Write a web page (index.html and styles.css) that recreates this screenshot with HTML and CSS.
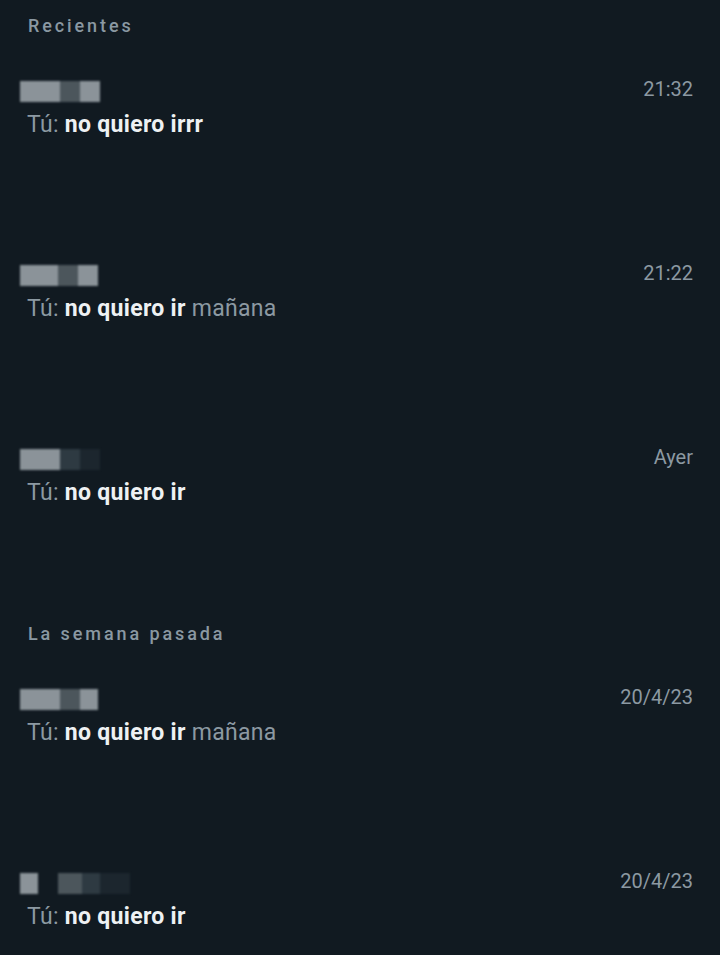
FILE: index.html
```html
<!DOCTYPE html>
<html lang="es">
<head>
    <meta charset="UTF-8">
    <meta name="viewport" content="width=device-width, initial-scale=1.0">
    <title>Chats</title>
    <link rel="stylesheet" href="styles.css">
</head>
<body>
    <div id="chat-list">
        <h3 class="section-title first">Recientes</h3>

        <div class="chat-row">
            <div class="chat-top">
                <div class="name-blur">
                    <span class="blk light w40"></span><span class="blk dark w20"></span><span class="blk light w20"></span>
                </div>
                <span class="time">21:32</span>
            </div>
            <div class="preview"><span class="you">Tú:</span> <strong>no quiero irrr</strong></div>
        </div>

        <div class="chat-row">
            <div class="chat-top">
                <div class="name-blur">
                    <span class="blk light w38"></span><span class="blk dark w20"></span><span class="blk light w20"></span>
                </div>
                <span class="time">21:22</span>
            </div>
            <div class="preview"><span class="you">Tú:</span> <strong>no quiero ir</strong> <span class="you">mañana</span></div>
        </div>

        <div class="chat-row">
            <div class="chat-top">
                <div class="name-blur">
                    <span class="blk light w40"></span><span class="blk darker w20"></span><span class="blk faint w20"></span>
                </div>
                <span class="time">Ayer</span>
            </div>
            <div class="preview"><span class="you">Tú:</span> <strong>no quiero ir</strong></div>
        </div>

        <h3 class="section-title">La semana pasada</h3>

        <div class="chat-row">
            <div class="chat-top">
                <div class="name-blur">
                    <span class="blk light w40"></span><span class="blk dark w20"></span><span class="blk light w18"></span>
                </div>
                <span class="time">20/4/23</span>
            </div>
            <div class="preview"><span class="you">Tú:</span> <strong>no quiero ir</strong> <span class="you">mañana</span></div>
        </div>

        <div class="chat-row">
            <div class="chat-top">
                <div class="name-blur">
                    <span class="blk light w18"></span><span class="blk gap w20"></span><span class="blk dark w24"></span><span class="blk darker w18"></span><span class="blk faint w30"></span>
                </div>
                <span class="time">20/4/23</span>
            </div>
            <div class="preview"><span class="you">Tú:</span> <strong>no quiero ir</strong></div>
        </div>
    </div>
</body>
</html>
```

FILE: styles.css
```css
body {
    margin: 0;
    background-color: #111a21;
    font-family: Roboto, "Noto Sans", Arial, sans-serif;
    color: #e9edef;
}
#chat-list {
    width: 720px;
    height: 955px;
    overflow: hidden;
}
.section-title {
    margin: 0;
    padding: 2px 0 0 28px;
    height: 54px;
    font-size: 18px;
    font-weight: 500;
    letter-spacing: 2.9px;
    color: #8a98a2;
    line-height: 20px;
}
.section-title.first {
    padding-top: 16px;
    height: 54px;
}
.chat-row {
    height: 184px;
    padding: 0 27px 0 20px;
    box-sizing: border-box;
}
.chat-top {
    display: flex;
    justify-content: space-between;
    align-items: center;
    height: 42px;
}
.name-blur {
    display: flex;
    height: 21px;
    filter: blur(1px);
}
.blk {
    height: 100%;
}
.light { background-color: #8b9399; }
.dark { background-color: #4c565c; }
.darker { background-color: #2e3a42; }
.faint { background-color: #1c262e; }
.gap { background-color: transparent; }
.w18 { width: 18px; }
.w20 { width: 20px; }
.w24 { width: 24px; }
.w30 { width: 30px; }
.w38 { width: 38px; }
.w40 { width: 40px; }
.time {
    margin-bottom: 4px;
    font-size: 20px;
    color: #8c99a2;
}
.preview {
    padding-left: 7px;
    font-size: 23px;
    letter-spacing: 0.3px;
    line-height: 26px;
}
.you {
    color: #8c99a2;
}
.preview strong {
    font-weight: 700;
    color: #eef1f3;
}
```
